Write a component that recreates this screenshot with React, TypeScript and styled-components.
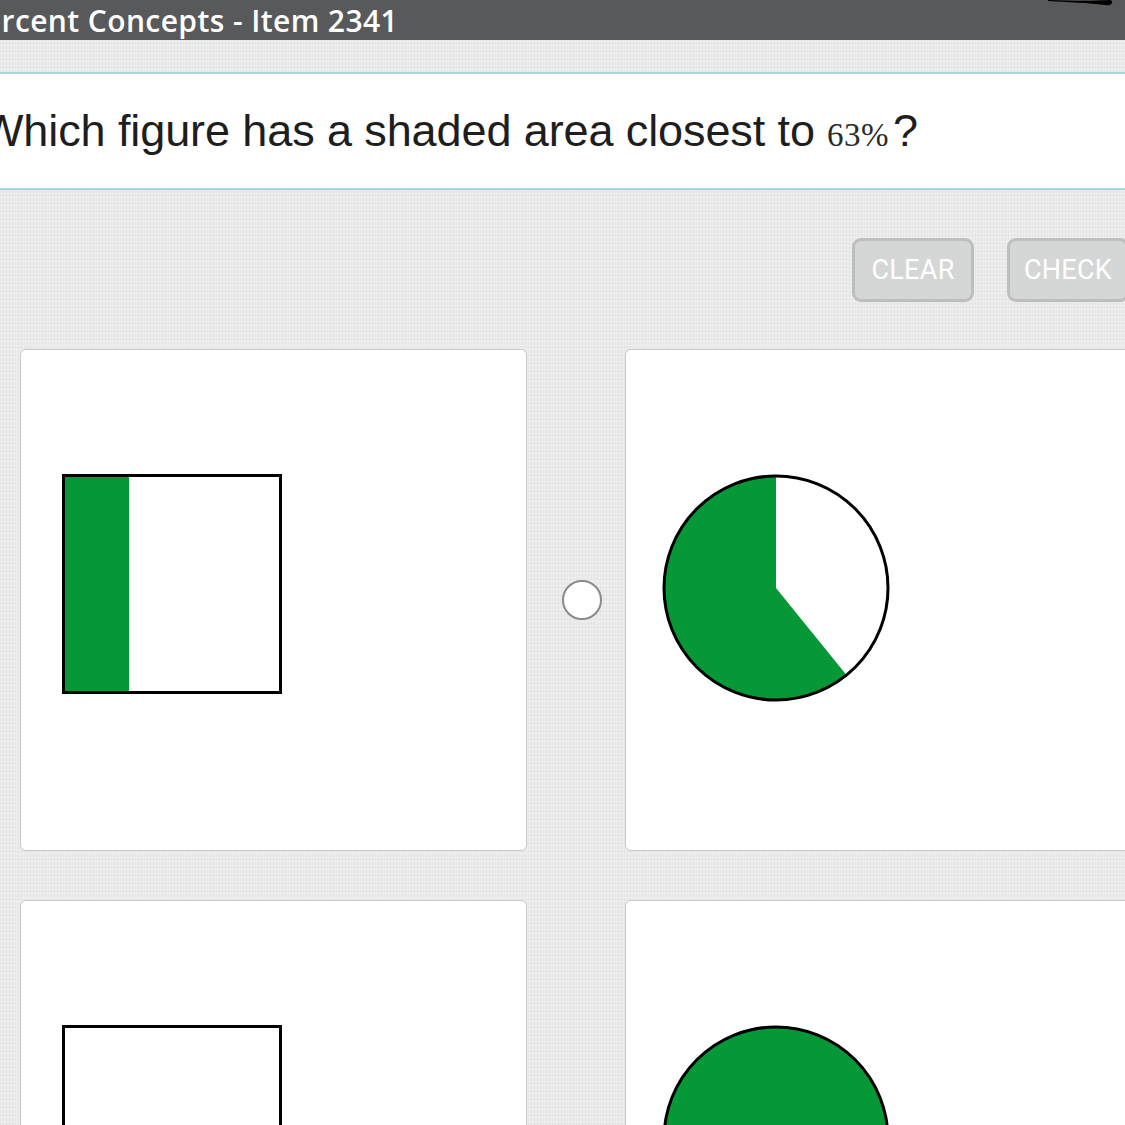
import React from 'react'
import styled, { createGlobalStyle } from 'styled-components'

const GlobalStyle = createGlobalStyle`
  html, body {
    margin: 0;
    padding: 0;
    overflow: hidden;
  }
  body {
    background-color: #eaeaea;
    background-image:
      repeating-linear-gradient(90deg, rgba(0, 0, 0, 0.025) 0 1px, transparent 1px 3px),
      repeating-linear-gradient(0deg, rgba(255, 255, 255, 0.35) 0 1px, transparent 1px 4px);
    font-family: 'Liberation Sans', Arial, sans-serif;
  }
`

const Page = styled.div`
  position: relative;
  width: 1125px;
`

const Header = styled.header`
  height: 40px;
  background: #58595b;
  display: flex;
  align-items: center;
  overflow: hidden;
`

const Title = styled.h1`
  margin: 0 0 0 -35px;
  color: #fff;
  font-family: 'Open Sans', sans-serif;
  font-weight: 600;
  font-size: 30px;
  letter-spacing: 0.4px;
  white-space: nowrap;
`

const Stroke = styled.svg`
  position: absolute;
  top: 0;
  right: 11px;
`

const QuestionBar = styled.section`
  margin-top: 32px;
  height: 114px;
  background: #fff;
  border-top: 2px solid #a9d6de;
  border-bottom: 2px solid #a9d6de;
  display: flex;
  align-items: center;
  overflow: hidden;
`

const Question = styled.p`
  margin: 0 0 0 -19px;
  font-size: 45px;
  letter-spacing: -0.1px;
  color: #1e1e1e;
  white-space: nowrap;
  display: flex;
  align-items: baseline;
`

const MathText = styled.span`
  font-family: 'Liberation Serif', 'Times New Roman', serif;
  font-size: 33px;
  letter-spacing: 0.5px;
  color: #2a2a2a;
  margin-left: 12px;
`

const Mark = styled.span`
  margin-left: 4px;
`

const Toolbar = styled.div`
  display: flex;
  justify-content: flex-end;
  gap: 33px;
  margin: 48px -4px 0 0;
`

const Button = styled.button`
  width: 122px;
  height: 64px;
  border: 3px solid #bdbebe;
  border-radius: 9px;
  background: #d5d6d6;
  color: #fff;
  font-family: Roboto, sans-serif;
  font-size: 27px;
  letter-spacing: 0.3px;
  padding: 0;
`

const Options = styled.div`
  display: grid;
  grid-template-columns: 570px 570px;
  column-gap: 35px;
  row-gap: 49px;
  margin: 47px 0 0 -43px;
`

const Option = styled.div`
  display: flex;
  align-items: center;
  gap: 23px;
`

const Radio = styled.span`
  flex: none;
  width: 36px;
  height: 36px;
  border: 2px solid #8a8a8a;
  border-radius: 50%;
  background: #fff;
`

const Card = styled.div`
  box-sizing: border-box;
  width: 507px;
  height: 502px;
  background: #fff;
  border: 1.5px solid #c9c9c9;
  border-radius: 6px;
  padding: 123px 0 0 35px;
`

const Square = styled.div`
  box-sizing: border-box;
  width: 220px;
  height: 220px;
  margin: 1px 0 0 6px;
  border: 3px solid #000;
  display: flex;
`

const Fill = styled.div<{ pct: number }>`
  width: ${p => p.pct}%;
  background: #069737;
`

const GREEN = '#069737'

const Pie = ({ angle }: { angle: number }) => {
  const r = 112
  const c = 115
  if (angle >= 360) {
    return (
      <svg width="230" height="230" viewBox="0 0 230 230">
        <circle cx={c} cy={c} r={r} fill={GREEN} stroke="#000" strokeWidth="3" />
      </svg>
    )
  }
  // shaded part runs counter-clockwise from 12 o'clock
  const rad = ((360 - angle) * Math.PI) / 180
  const x = c + r * Math.sin(rad)
  const y = c - r * Math.cos(rad)
  const large = angle > 180 ? 1 : 0
  return (
    <svg width="230" height="230" viewBox="0 0 230 230">
      <circle cx={c} cy={c} r={r} fill="#fff" />
      <path d={`M${c} ${c} L${c} ${c - r} A${r} ${r} 0 ${large} 0 ${x} ${y} Z`} fill={GREEN} />
      <circle cx={c} cy={c} r={r} fill="none" stroke="#000" strokeWidth="3" />
    </svg>
  )
}

const App: React.FC = () => (
  <Page>
    <GlobalStyle />
    <Header>
      <Title>Percent Concepts - Item 2341</Title>
    </Header>
    <Stroke width="66" height="10" viewBox="0 0 66 10">
      <path d="M0 0 C25 1 45 1 62 0 L64 1 C65 4 62 6 57 5 C40 3 20 2 0 1 Z" fill="#000" />
    </Stroke>
    <QuestionBar>
      <Question>
        Which figure has a shaded area closest to
        <MathText>63%</MathText>
        <Mark>?</Mark>
      </Question>
    </QuestionBar>
    <Toolbar>
      <Button>CLEAR</Button>
      <Button>CHECK</Button>
    </Toolbar>
    <Options>
      <Option>
        <Radio />
        <Card>
          <Square>
            <Fill pct={30} />
          </Square>
        </Card>
      </Option>
      <Option>
        <Radio />
        <Card>
          <Pie angle={219} />
        </Card>
      </Option>
      <Option>
        <Radio />
        <Card>
          <Square>
            <Fill pct={0} />
          </Square>
        </Card>
      </Option>
      <Option>
        <Radio />
        <Card>
          <Pie angle={360} />
        </Card>
      </Option>
    </Options>
  </Page>
)

export default App
